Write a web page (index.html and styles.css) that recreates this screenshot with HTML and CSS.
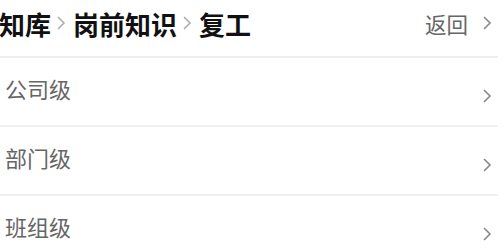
FILE: index.html
```html
<!DOCTYPE html>
<html lang="zh-CN">
<head>
    <meta charset="UTF-8">
    <meta name="viewport" content="width=device-width, initial-scale=1.0">
    <title>知库</title>
    <link rel="stylesheet" href="styles.css">
</head>
<body>
    <div class="header">
        <div class="crumbs">
            <span class="crumb">知库</span>
            <svg class="sep" width="10" height="16" viewBox="0 0 10 16"><path d="M2 2 L8 8 L2 14" fill="none" stroke="#aaa" stroke-width="1.5"/></svg>
            <span class="crumb">岗前知识</span>
            <svg class="sep" width="10" height="16" viewBox="0 0 10 16"><path d="M2 2 L8 8 L2 14" fill="none" stroke="#aaa" stroke-width="1.5"/></svg>
            <span class="crumb">复工</span>
        </div>
        <div class="back">
            <span>返回</span>
            <svg class="arrow" width="10" height="16" viewBox="0 0 10 16"><path d="M2 2 L8 8 L2 14" fill="none" stroke="#888" stroke-width="1.6"/></svg>
        </div>
    </div>

    <div class="list">
        <div class="row">
            <span class="label">公司级</span>
            <svg class="arrow" width="10" height="16" viewBox="0 0 10 16"><path d="M2 2 L8 8 L2 14" fill="none" stroke="#888" stroke-width="1.6"/></svg>
        </div>
        <div class="row">
            <span class="label">部门级</span>
            <svg class="arrow" width="10" height="16" viewBox="0 0 10 16"><path d="M2 2 L8 8 L2 14" fill="none" stroke="#888" stroke-width="1.6"/></svg>
        </div>
        <div class="row">
            <span class="label">班组级</span>
            <svg class="arrow" width="10" height="16" viewBox="0 0 10 16"><path d="M2 2 L8 8 L2 14" fill="none" stroke="#888" stroke-width="1.6"/></svg>
        </div>
    </div>
</body>
</html>
```

FILE: styles.css
```css
body {
    margin: 0;
    background-color: #fff;
    font-family: "Noto Sans CJK SC", sans-serif;
    width: 504px;
    height: 249px;
    overflow: hidden;
}

.header {
    display: flex;
    align-items: center;
    justify-content: space-between;
    height: 56px;
    padding-right: 6px;
    margin-right: 6px;
    border-bottom: 2px solid #eee;
}

.crumbs {
    display: flex;
    align-items: center;
    margin-left: -1px;
    margin-top: -10px;
}

.crumb {
    font-size: 26px;
    font-weight: 700;
    color: #111;
}

.sep {
    margin: 0 7px 0 5px;
}

.back {
    display: flex;
    align-items: center;
    gap: 14px;
    margin-top: -10px;
    font-size: 21.5px;
    color: #666;
}

.row {
    display: flex;
    align-items: center;
    justify-content: space-between;
    height: 67px;
    padding: 0 6px 0 5px;
    margin-right: 6px;
    border-bottom: 2px solid #f0f0f0;
}

.label {
    font-size: 22px;
    color: #666;
    margin-top: -8px;
}

.row .arrow {
    margin-top: 8px;
}
```
